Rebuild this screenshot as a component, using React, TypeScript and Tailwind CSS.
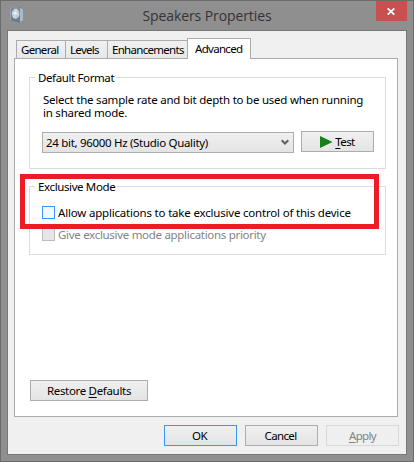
import React from 'react';

function Speaker() {
  return (
    <svg width="14" height="16" viewBox="0 0 14 16" className="block">
      <path d="M0 .8 9.5 .3 13 1.6 13 13.8 9.8 15.6 0 13Z" fill="#5d7283" />
      <path d="M9.6 1 13 1.8 13 13.6 10 15.3Z" fill="#a6bccd" />
      <path d="M.6 1.4 9.4 1 9.8 14.6 .6 12.5Z" fill="#6c8294" />
      <path d="M.5 13V1H9.5" fill="none" stroke="#a3b3c0" strokeWidth=".8" />
      <ellipse cx="5.6" cy="6.8" rx="3.8" ry="5" fill="#ccd6dc" />
      <path d="M3.5 3 7.5 11M2.4 8.5 8.5 4.8" stroke="#a2b0ba" strokeWidth=".8" />
      <circle cx="5.2" cy="6.2" r="1.7" fill="#eef1f3" />
    </svg>
  );
}

const face = 'flex shrink-0 border bg-linear-to-b from-[#f0f0f0] to-[#e4e4e4]';
const tab =
  'mb-px h-[18px] border border-r-0 border-b-0 border-[#acacac] bg-linear-to-b from-[#f0f0f0] to-[#e8e8e8] pl-1 leading-[18px]';

function Button({ className, children }: { className: string; children: React.ReactNode }) {
  return (
    <button className={`${face} h-[21px] items-center justify-center leading-[19px] ${className}`}>
      <span className="flex items-center whitespace-pre">{children}</span>
    </button>
  );
}

function Key({ children }: { children: string }) {
  return <span className="underline decoration-1 underline-offset-2">{children}</span>;
}

function Group({ title, className, children }: { title: string; className: string; children: React.ReactNode }) {
  return (
    <section className={`w-[357px] border border-[#dcdcdc] ${className}`}>
      <h2 className="-mt-2 ml-[5px] h-4 w-fit bg-white pr-[2px] pl-[3px] leading-4 tracking-[-0.38px]">{title}</h2>
      {children}
    </section>
  );
}

export default function App() {
  return (
    <main className="relative flex h-[462px] w-[414px] flex-col overflow-hidden border border-[#6b6b6b] bg-[#8f8f8f] font-['Noto_Sans','Open_Sans',sans-serif] text-[11.5px] whitespace-nowrap text-black">
      <header className="flex h-[29px] shrink-0 justify-between pr-[6px] pl-[9px]">
        <div className="w-[31px] pt-[6px]"><Speaker /></div>
        <h1 className="pt-[4px] pr-[3px] font-['Open_Sans'] text-[14px] leading-[22px] tracking-[-0.1px] text-[#343434]">Speakers Properties</h1>
        <button className="flex h-5 w-[31px] items-center justify-center bg-[#c75050]">
          <svg width="8" height="7" viewBox="0 0 8 7"><path d="M.7.3 7.3 6.7M7.3.3.7 6.7" stroke="#fff" strokeWidth="1.7" /></svg>
        </button>
      </header>
      <div className="ml-[6px] flex h-[425px] w-[400px] shrink-0 flex-col border border-[#777] bg-[#f0f0f0] pt-[7px] pl-[6px]">
        <nav className="z-10 flex h-[21px] shrink-0 items-end pl-[2px] tracking-[-0.7px]">
          <div className={`${tab} w-[49px]`}>General</div>
          <div className={`${tab} w-[42px]`}>Levels</div>
          <div className={`${tab} w-[80px]`}>Enhancements</div>
          <div className="h-[21px] w-[64px] border border-b-0 border-[#acacac] bg-white pl-[7px] leading-[19px]">Advanced</div>
        </nav>
        <div className="-mt-px flex h-[359px] w-[384px] shrink-0 flex-col border border-[#acacac] bg-white pt-[18px] pl-[14px]">
          <Group title="Default Format" className="h-[92px]">
            <p className="mt-[7px] pl-[13px] leading-[13px] tracking-[-0.23px]">Select the sample rate and bit depth to be used when running<br />in shared mode.</p>
            <div className="mt-[12px] flex pl-3">
              <div className={`${face} mt-px h-[21px] w-[252px] items-center justify-between border-[#acacac] pr-[4px] pl-[3px] leading-[19px]`}>
                <span className="tracking-[-0.31px]">24 bit, 96000 Hz (Studio Quality)</span>
                <svg width="8" height="7" viewBox="0 0 8 7"><path d="M.7 1.2 4 4.5 7.3 1.2" fill="none" stroke="#606060" strokeWidth="2" /></svg>
              </div>
              <Button className="ml-[7px] w-[73px] border-[#acacac]">
                <svg width="13" height="12" viewBox="0 0 13 12" className="mr-[2px]"><path d="M0 0 12.5 6 0 12Z" fill="#16801b" /></svg>
                <span className="tracking-[-0.6px]"><Key>T</Key>est</span>
              </Button>
            </div>
          </Group>
          <Group title="Exclusive Mode" className="mt-[17px] h-[69px]">
            <label className="mt-[11px] flex h-[13px] items-center pl-3 leading-[13px] tracking-[-0.19px]">
              <i className="mr-[3px] size-[13px] border border-[#3399ff] bg-[#f3f8ff]" />Allow applications to take exclusive control of this device
            </label>
            <label className="mt-[9px] flex h-[13px] items-center pl-3 leading-[13px] tracking-[-0.3px] text-[#838383]">
              <i className="mr-[3px] size-[13px] border border-[#bcbcbc] bg-[#e6e6e6]" />Give exclusive mode applications priority
            </label>
          </Group>
          <Button className="mt-[125px] ml-px w-[118px] border-[#acacac] tracking-[-0.32px]"><span>Restore <Key>D</Key>efaults</span></Button>
        </div>
        <footer className="mt-2 flex gap-2 pl-[150px] tracking-[-0.65px]">
          <Button className="w-[73px] border-[#3399ff] pr-[2px]">OK</Button>
          <Button className="w-[73px] border-[#acacac] pr-[2px]">Cancel</Button>
          <Button className="w-[73px] border-[#d9d9d9] from-[#efefef] to-[#efefef] text-[#838383]"><span><Key>A</Key>pply</span></Button>
        </footer>
      </div>
      <div className="pointer-events-none absolute top-[173px] left-[19px] z-20 h-[55px] w-[359px] border-5 border-[#ed1c24]" />
    </main>
  );
}
